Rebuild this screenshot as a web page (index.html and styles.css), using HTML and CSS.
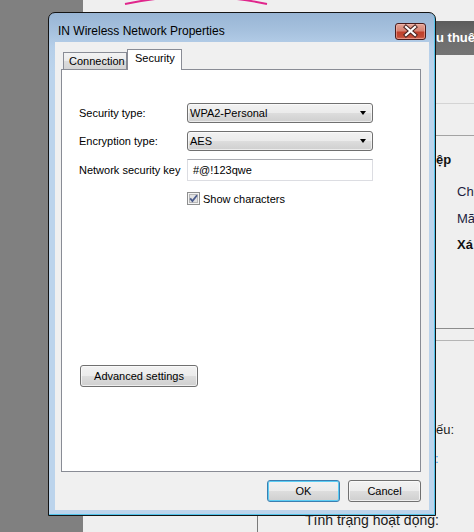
FILE: index.html
```html
<!DOCTYPE html>
<html>
<head>
<meta charset="utf-8">
<link rel="stylesheet" href="styles.css">
</head>
<body>
<div class="desktop">
  <div class="side"></div>
  <div class="page">
    <svg class="swoosh" width="391" height="21" viewBox="0 0 391 21"><path d="M42 4 Q113 -11 184 4" fill="none" stroke="#e0268c" stroke-width="2"/></svg>
    <div class="bar"><span>u thuê</span></div>
    <div class="rule rule-a"></div>
    <div class="rule rule-b"></div>
    <div class="txt bold r1">ệp</div>
    <div class="txt in r2">Chu</div>
    <div class="txt in r3">Mã</div>
    <div class="txt in bold r4">Xá</div>
    <div class="rule rule-c"></div>
    <div class="rule rule-d"></div>
    <div class="txt r5">ếu:</div>
    <div class="txt blue r6">:</div>
    <div class="bottom"><span>Tình trạng hoạt động:</span></div>
  </div>
</div>

<div class="dialog">
  <div class="titlebar">
    <span class="title">IN Wireless Network Properties</span>
    <div class="close">
      <svg width="29" height="15" viewBox="0 0 29 15">
        <path d="M10 3 L19 11 M19 3 L10 11" stroke="#4a2422" stroke-width="4.2" stroke-linecap="square"/>
        <path d="M10 3 L19 11 M19 3 L10 11" stroke="#ffffff" stroke-width="2.2" stroke-linecap="square"/>
      </svg>
    </div>
  </div>
  <div class="client">
    <div class="tabs">
      <div class="tab">Connection</div>
      <div class="tab active">Security</div>
    </div>
    <div class="panel">
      <div class="form">
        <span class="lbl">Security type:</span>
        <div class="combo"><span>WPA2-Personal</span><i class="arrow"></i></div>
        <span class="lbl">Encryption type:</span>
        <div class="combo"><span>AES</span><i class="arrow"></i></div>
        <span class="lbl">Network security key</span>
        <div class="field">#@!123qwe</div>
      </div>
      <div class="check">
        <span class="box">
          <svg width="13" height="13" viewBox="0 0 13 13">
            <rect x="0.5" y="0.5" width="12" height="12" fill="#f4f4f4" stroke="#8e8f8f"/>
            <rect x="2.5" y="2.5" width="8" height="8" fill="#e2e2e2" stroke="#b8b8b8"/>
            <path d="M3.2 6.4 L5.4 9 L10 3.2" fill="none" stroke="#4a5b8c" stroke-width="1.8"/>
          </svg>
        </span>
        <span>Show characters</span>
      </div>
      <button class="btn adv">Advanced settings</button>
    </div>
    <div class="actions">
      <button class="btn ok">OK</button>
      <button class="btn">Cancel</button>
    </div>
  </div>
</div>
</body>
</html>
```
FILE: styles.css
```css
* { box-sizing: border-box; }
html, body {
  margin: 0;
  padding: 0;
  width: 474px;
  height: 532px;
  overflow: hidden;
  font-family: "Liberation Sans", Arial, sans-serif;
}
.desktop {
  display: grid;
  grid-template-columns: 83px 1fr;
  height: 532px;
}
.side { background: #808080; }
.page {
  background: #efefef;
  display: flex;
  flex-direction: column;
  overflow: hidden;
  color: #1b1b1b;
}
.swoosh { display: block; flex: none; }
.bar {
  flex: none;
  height: 34px;
  background: linear-gradient(#5c5c5c, #6f6f6f 60%, #747474);
  color: #fff;
  font-weight: bold;
  font-size: 13px;
  line-height: 34px;
  padding-left: 353px;
  white-space: nowrap;
}
.rule { flex: none; height: 1px; }
.rule-a { margin-top: 48px; background: #d4d4d4; }
.rule-b { margin-top: 31px; background: #a3a3a3; }
.rule-c { margin-top: 73px; background: #8c8c8c; }
.rule-d { margin-top: 11px; background: #b5b5b5; }
.txt {
  flex: none;
  height: 20px;
  line-height: 20px;
  font-size: 13px;
  padding-left: 353px;
  white-space: nowrap;
}
.txt.in { padding-left: 374px; color: #1d1d40; }
.txt.bold { font-weight: bold; color: #111; }
.r1 { margin-top: 14px; }
.r2 { margin-top: 12px; }
.r3 { margin-top: 7px; }
.r4 { margin-top: 6px; }
.r5 { margin-top: 79px; }
.r6 { margin-top: 9px; padding-left: 352px; color: #3c96f0; }
.bottom {
  flex: 1;
  margin-left: 174px;
  border-left: 1px solid #7a7a7a;
  padding-left: 47px;
  padding-top: 41px;
  font-size: 14px;
  line-height: 20px;
  white-space: nowrap;
}

/* dialog window */
.dialog {
  position: absolute;
  left: 48px;
  top: 12px;
  width: 388px;
  height: 504px;
  border: 1px solid #141414;
  border-radius: 7px 7px 0 0;
  background: linear-gradient(#98b5d5 0, #a6c1de 18px, #b6cfe9 34px, #bcd4ec 60px, #bcd4ec 100%);
  box-shadow: inset -1px -1px 0 #52c3ea;
  display: flex;
  flex-direction: column;
}
.titlebar {
  flex: none;
  height: 29px;
  display: flex;
  justify-content: space-between;
  align-items: flex-start;
  padding: 10px 9px 0 9px;
}
.title {
  font-size: 12px;
  line-height: 16px;
  color: #000;
  white-space: nowrap;
}
.close {
  width: 31px;
  height: 17px;
  border: 1px solid #4a1c1c;
  border-radius: 3px;
  background: linear-gradient(#e2a597 0%, #d78272 45%, #c0402b 55%, #c24b36 85%, #d5705e 100%);
  box-shadow: inset 0 0 0 1px rgba(255, 200, 190, 0.45);
}
.close svg { display: block; }

.client {
  flex: 1;
  margin: 0 6px 5px 6px;
  background: #f0f0f0;
  padding: 7px 8px 8px 6px;
  display: flex;
  flex-direction: column;
  font-size: 11px;
  color: #000;
}
.tabs {
  flex: none;
  height: 20px;
  display: flex;
  align-items: flex-end;
  padding-left: 2px;
}
.tab {
  height: 17px;
  width: 64px;
  border: 1px solid #898c95;
  border-bottom: none;
  background: linear-gradient(#f3f3f3, #ebebeb 50%, #dcdcdc 51%, #d4d4d4);
  padding-left: 5px;
  line-height: 16px;
  white-space: nowrap;
}
.tab.active {
  width: 55px;
  height: 21px;
  margin-bottom: -1px;
  background: #fff;
  padding-left: 7px;
  line-height: 17px;
  z-index: 1;
  position: relative;
}
.panel {
  flex: none;
  height: 403px;
  background: #fff;
  border: 1px solid #898c95;
  padding: 33px 0 0 17px;
  display: flex;
  flex-direction: column;
  align-items: flex-start;
}
.form {
  display: grid;
  grid-template-columns: 108px 186px;
  grid-template-rows: 20px 20px 22px;
  row-gap: 8px;
  align-items: center;
}
.lbl { white-space: nowrap; }
.combo {
  height: 20px;
  border: 1px solid #707070;
  border-radius: 3px;
  background: linear-gradient(#f2f2f2, #ebebeb 50%, #dddddd 51%, #cfcfcf);
  box-shadow: inset 0 0 0 1px rgba(255,255,255,0.6);
  display: flex;
  align-items: center;
  justify-content: space-between;
  padding: 0 6px 0 2px;
  line-height: 18px;
}
.arrow {
  width: 0;
  height: 0;
  border-left: 3.5px solid transparent;
  border-right: 3.5px solid transparent;
  border-top: 4px solid #000;
}
.field {
  height: 22px;
  border: 1px solid #dcdde2;
  border-top-color: #abadb3;
  background: #fff;
  padding-left: 5px;
  line-height: 20px;
}
.check {
  margin: 11px 0 0 108px;
  display: flex;
  align-items: center;
  gap: 3px;
  height: 13px;
  white-space: nowrap;
}
.box svg { display: block; }
.btn {
  font-family: "Liberation Sans", Arial, sans-serif;
  font-size: 11px;
  color: #000;
  height: 22px;
  border: 1px solid #707070;
  border-radius: 3px;
  background: linear-gradient(#f2f2f2, #ebebeb 50%, #dddddd 51%, #cfcfcf);
  box-shadow: inset 0 0 0 1px rgba(252,252,252,0.7);
  padding: 0;
  margin: 0;
}
.adv {
  margin: 160px 0 0 1px;
  width: 118px;
}
.actions {
  flex: none;
  margin-top: 8px;
  display: flex;
  justify-content: flex-end;
  gap: 8px;
}
.actions .btn { width: 73px; }
.btn.ok {
  border-color: #3c7fb1;
  box-shadow: inset 0 0 0 1px #5ccdf4;
}
```
